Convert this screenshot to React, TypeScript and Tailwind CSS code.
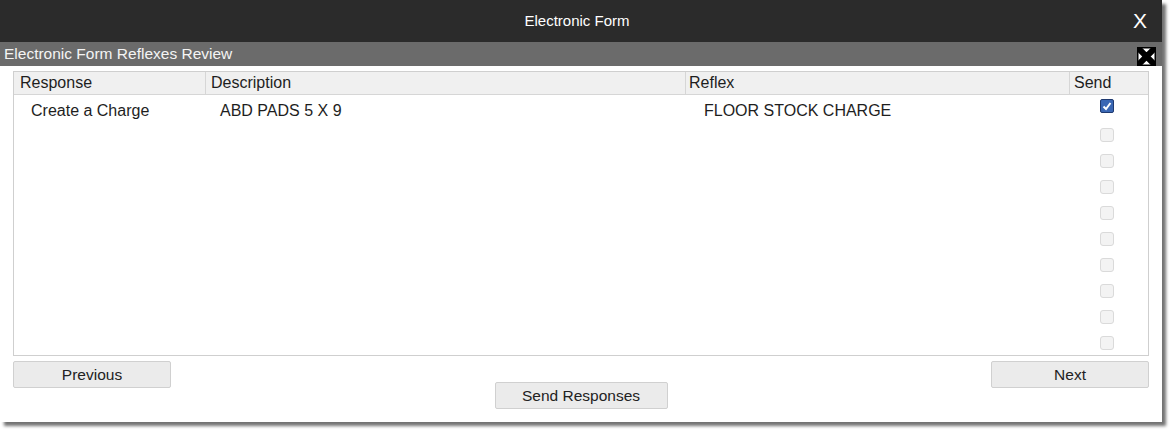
import React from 'react'

// Reflex rows returned by the electronic form; only the first has data
const REFLEXES = [
  { response: 'Create a Charge', description: 'ABD PADS 5 X 9', reflex: 'FLOOR STOCK CHARGE', send: true, enabled: true },
]
const ROW_COUNT = 10

function CloseBox() {
  return (
    <svg width="19" height="19" viewBox="0 0 19 19" className="block">
      <rect x="0" y="0" width="19" height="19" fill="#000" />
      <rect x="1.5" y="1.5" width="16" height="16" fill="#fff" />
      <path d="M1 1 L18 18 M18 1 L1 18" stroke="#000" strokeWidth="6" />
    </svg>
  )
}

function Checkbox({ checked, disabled }: { checked?: boolean; disabled?: boolean }) {
  if (checked) {
    return (
      <div className="w-[14px] h-[14px] rounded-[2px] bg-[#3a67b4] border border-[#1f3a70] flex items-center justify-center">
        <svg width="10" height="10" viewBox="0 0 10 10">
          <path d="M1.5 5.5 L4 8 L8.5 2" fill="none" stroke="#fff" strokeWidth="2" />
        </svg>
      </div>
    )
  }
  return (
    <div
      className={`w-[14px] h-[14px] rounded-[3px] border ${
        disabled ? 'border-[#dadada] bg-[#f3f3f3]' : 'border-[#8a8a8a] bg-white'
      }`}
    />
  )
}

function FormButton({ label, className = '' }: { label: string; className?: string }) {
  return (
    <button
      className={`h-[27px] rounded-[2px] border border-[#d0d0d0] bg-[#ebebeb] text-[15.5px] text-[#222] ${className}`}
    >
      {label}
    </button>
  )
}

export default function App() {
  return (
    <div className="w-[1171px] h-[432px] bg-white" style={{ fontFamily: '"Liberation Sans", Arial, sans-serif' }}>
      <div className="w-[1162px] h-[422px] bg-white flex flex-col shadow-[4px_4px_3px_rgba(0,0,0,0.55)]">
        {/* Window title */}
        <div className="h-[42px] bg-[#2b2b2b] flex items-center justify-center relative">
          <span className="text-white text-[15px] -ml-[8px]">Electronic Form</span>
          <span className="absolute right-[15px] top-[8px] text-white text-[21px] leading-[26px]">X</span>
        </div>

        {/* Dialog subtitle */}
        <div className="h-[24px] bg-[#6b6b6b] flex items-center justify-between pl-[4px] pr-[6px]">
          <span className="text-[#f4f4f4] text-[15.5px] leading-[24px]">Electronic Form Reflexes Review</span>
          <div className="self-end">
            <CloseBox />
          </div>
        </div>

        <div className="flex-1 px-[13px] pt-[5px] flex flex-col">
          {/* Table */}
          <div className="h-[285px] border border-[#cfcfcf] flex flex-col text-[16px] text-[#1e1e1e]">
            <div className="h-[23px] bg-[#f0f0f0] border-b border-[#d6d6d6] grid grid-cols-[192px_480px_384px_1fr] leading-[22px]">
              <div className="pl-[6px] border-r border-[#d6d6d6]">Response</div>
              <div className="pl-[5px] border-r border-[#d6d6d6]">Description</div>
              <div className="pl-[3px] border-r border-[#d6d6d6]">Reflex</div>
              <div className="pl-[4px]">Send</div>
            </div>
            <div className="flex-1 flex">
              <div className="flex-1 flex flex-col pt-[6px]">
                {REFLEXES.map((r, i) => (
                  <div key={i} className="grid grid-cols-[192px_480px_384px] h-[20px] leading-[20px]">
                    <div className="pl-[17px]">{r.response}</div>
                    <div className="pl-[14px]">{r.description}</div>
                    <div className="pl-[18px]">{r.reflex}</div>
                  </div>
                ))}
              </div>
              <div className="w-[78px] flex flex-col pl-[30px] pt-[4px] gap-[12px]">
                {Array.from({ length: ROW_COUNT }).map((_, i) => {
                  const r = REFLEXES[i]
                  return (
                    <div key={i} className={i === 0 ? 'mb-[3px]' : ''}>
                      <Checkbox checked={r?.send} disabled={!r?.enabled} />
                    </div>
                  )
                })}
              </div>
            </div>
          </div>

          {/* Footer buttons */}
          <div className="mt-[5px] grid grid-cols-[158px_1fr_158px]">
            <FormButton label="Previous" className="w-[158px]" />
            <div className="flex justify-center pt-[21px]">
              <FormButton label="Send Responses" className="w-[173px]" />
            </div>
            <FormButton label="Next" className="w-[158px]" />
          </div>
        </div>
      </div>
    </div>
  )
}
